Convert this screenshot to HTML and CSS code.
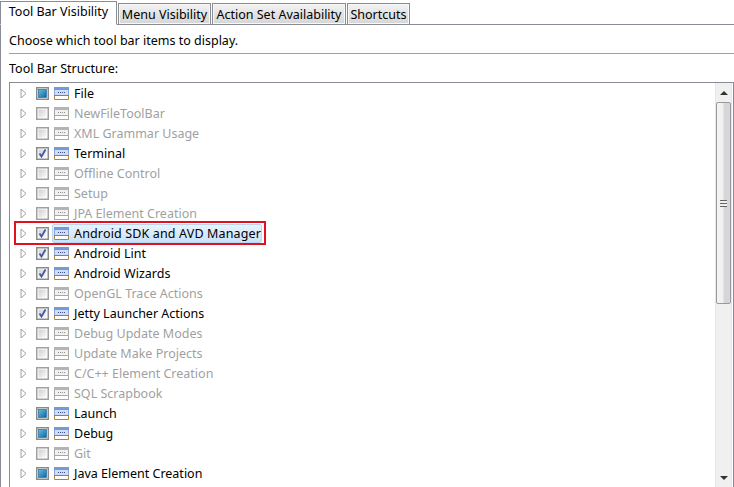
FILE: index.html
```html
<!DOCTYPE html>
<html>
<head>
<meta charset="utf-8">
<title>Tool Bar Visibility</title>
<link rel="stylesheet" href="styles.css">
</head>
<body>
<svg class="defs" width="0" height="0" aria-hidden="true">
  <defs>
    <symbol id="arrow" viewBox="0 0 7 11"><path d="M1 1 L6 5.5 L1 10 Z" fill="#fff" stroke="#a0a0a0"/></symbol>
    <symbol id="bar" viewBox="0 0 15 13">
      <rect x="0" y="0" width="15" height="13" fill="#fff"/>
      <rect x="0" y="0" width="15" height="3" fill="#6f9bd8"/>
      <rect x="0" y="3" width="15" height="5" fill="#d3dcf5"/>
      <path d="M0.5 3v5M14.5 3v5" stroke="#8fa6dc"/>
      <path d="M4 5.5h7" stroke="#3d4f88" stroke-dasharray="1 1"/>
      <path d="M0 8.5h15" stroke="#7f78b8"/>
      <path d="M0.5 9v3.5h14v-3.5" fill="none" stroke="#a8843f"/>
    </symbol>
    <symbol id="bar-off" viewBox="0 0 15 13">
      <rect x="0.5" y="0.5" width="14" height="12" fill="#fff" stroke="#a8a8a8"/>
      <rect x="0" y="0" width="15" height="3" fill="#b4b4b4"/>
      <rect x="1" y="3" width="13" height="5" fill="#f1f1f1"/>
      <path d="M4 5.5h7" stroke="#8f8f8f" stroke-dasharray="1 1"/>
      <path d="M0 8.5h15" stroke="#a8a8a8"/>
    </symbol>
    <linearGradient id="fill" x1="0" y1="0" x2="1" y2="1"><stop offset="0" stop-color="#6cbbdd"/><stop offset="1" stop-color="#07679f"/></linearGradient>
    <linearGradient id="boxbg" x1="0" y1="0" x2="1" y2="1"><stop offset="0" stop-color="#cfcfcf"/><stop offset="1" stop-color="#fbfbfb"/></linearGradient>
    <symbol id="cb-mixed" viewBox="0 0 13 13">
      <rect x="0.75" y="0.75" width="11.5" height="11.5" fill="#fff" stroke="#8a8a8a" stroke-width="1.5"/>
      <rect x="2.5" y="2.5" width="8" height="8" fill="url(#fill)" stroke="#1f6f9e" stroke-width="0.7"/>
    </symbol>
    <symbol id="cb-checked" viewBox="0 0 13 13">
      <rect x="0.75" y="0.75" width="11.5" height="11.5" fill="#fff" stroke="#8a8a8a" stroke-width="1.5"/>
      <rect x="2.5" y="2.5" width="8" height="8" fill="url(#boxbg)"/>
      <path d="M3.5 6.5 L5.5 9.5 L9.5 2.5" fill="none" stroke="#4458a8" stroke-width="1.8"/>
    </symbol>
    <symbol id="cb-off" viewBox="0 0 13 13">
      <rect x="0.75" y="0.75" width="11.5" height="11.5" fill="#fff" stroke="#a0a0a0" stroke-width="1.5"/>
      <rect x="2.5" y="2.5" width="8" height="8" fill="url(#boxbg)"/>
    </symbol>
  </defs>
</svg>
<div class="dialog">
  <div class="tabs">
    <div class="tab active">Tool Bar Visibility</div>
    <div class="tab t2">Menu Visibility</div>
    <div class="tab t3">Action Set Availability</div>
    <div class="tab t4">Shortcuts</div>
  </div>
  <div class="panel">
    <p class="intro">Choose which tool bar items to display.</p>
    <hr class="sep">
    <p class="label">Tool Bar Structure:</p>
    <div class="treebox">
      <ul class="tree">
        <li class="row"><svg class="arr"><use href="#arrow"/></svg><svg class="cb"><use href="#cb-mixed"/></svg><svg class="ic"><use href="#bar"/></svg><span class="txt">File</span></li>
        <li class="row off"><svg class="arr"><use href="#arrow"/></svg><svg class="cb"><use href="#cb-off"/></svg><svg class="ic"><use href="#bar-off"/></svg><span class="txt">NewFileToolBar</span></li>
        <li class="row off"><svg class="arr"><use href="#arrow"/></svg><svg class="cb"><use href="#cb-off"/></svg><svg class="ic"><use href="#bar-off"/></svg><span class="txt">XML Grammar Usage</span></li>
        <li class="row"><svg class="arr"><use href="#arrow"/></svg><svg class="cb"><use href="#cb-checked"/></svg><svg class="ic"><use href="#bar"/></svg><span class="txt">Terminal</span></li>
        <li class="row off"><svg class="arr"><use href="#arrow"/></svg><svg class="cb"><use href="#cb-off"/></svg><svg class="ic"><use href="#bar-off"/></svg><span class="txt">Offline Control</span></li>
        <li class="row off"><svg class="arr"><use href="#arrow"/></svg><svg class="cb"><use href="#cb-off"/></svg><svg class="ic"><use href="#bar-off"/></svg><span class="txt">Setup</span></li>
        <li class="row off"><svg class="arr"><use href="#arrow"/></svg><svg class="cb"><use href="#cb-off"/></svg><svg class="ic"><use href="#bar-off"/></svg><span class="txt">JPA Element Creation</span></li>
        <li class="row marked"><svg class="arr"><use href="#arrow"/></svg><svg class="cb"><use href="#cb-checked"/></svg><span class="sel"><svg class="ic"><use href="#bar"/></svg><span class="txt">Android SDK and AVD Manager</span></span><span class="redbox"></span></li>
        <li class="row"><svg class="arr"><use href="#arrow"/></svg><svg class="cb"><use href="#cb-checked"/></svg><svg class="ic"><use href="#bar"/></svg><span class="txt">Android Lint</span></li>
        <li class="row"><svg class="arr"><use href="#arrow"/></svg><svg class="cb"><use href="#cb-checked"/></svg><svg class="ic"><use href="#bar"/></svg><span class="txt">Android Wizards</span></li>
        <li class="row off"><svg class="arr"><use href="#arrow"/></svg><svg class="cb"><use href="#cb-off"/></svg><svg class="ic"><use href="#bar-off"/></svg><span class="txt">OpenGL Trace Actions</span></li>
        <li class="row"><svg class="arr"><use href="#arrow"/></svg><svg class="cb"><use href="#cb-checked"/></svg><svg class="ic"><use href="#bar"/></svg><span class="txt">Jetty Launcher Actions</span></li>
        <li class="row off"><svg class="arr"><use href="#arrow"/></svg><svg class="cb"><use href="#cb-off"/></svg><svg class="ic"><use href="#bar-off"/></svg><span class="txt">Debug Update Modes</span></li>
        <li class="row off"><svg class="arr"><use href="#arrow"/></svg><svg class="cb"><use href="#cb-off"/></svg><svg class="ic"><use href="#bar-off"/></svg><span class="txt">Update Make Projects</span></li>
        <li class="row off"><svg class="arr"><use href="#arrow"/></svg><svg class="cb"><use href="#cb-off"/></svg><svg class="ic"><use href="#bar-off"/></svg><span class="txt">C/C++ Element Creation</span></li>
        <li class="row off"><svg class="arr"><use href="#arrow"/></svg><svg class="cb"><use href="#cb-off"/></svg><svg class="ic"><use href="#bar-off"/></svg><span class="txt">SQL Scrapbook</span></li>
        <li class="row"><svg class="arr"><use href="#arrow"/></svg><svg class="cb"><use href="#cb-mixed"/></svg><svg class="ic"><use href="#bar"/></svg><span class="txt">Launch</span></li>
        <li class="row"><svg class="arr"><use href="#arrow"/></svg><svg class="cb"><use href="#cb-mixed"/></svg><svg class="ic"><use href="#bar"/></svg><span class="txt">Debug</span></li>
        <li class="row off"><svg class="arr"><use href="#arrow"/></svg><svg class="cb"><use href="#cb-off"/></svg><svg class="ic"><use href="#bar-off"/></svg><span class="txt">Git</span></li>
        <li class="row"><svg class="arr"><use href="#arrow"/></svg><svg class="cb"><use href="#cb-mixed"/></svg><svg class="ic"><use href="#bar"/></svg><span class="txt">Java Element Creation</span></li>
      </ul>
      <div class="scroll">
        <div class="sbtn"><span class="up"></span></div>
        <div class="thumb"><span class="grip"></span></div>
        <div class="track"></div>
        <div class="sbtn"><span class="down"></span></div>
      </div>
    </div>
  </div>
</div>
</body>
</html>
```
FILE: styles.css
```css
html, body {
  margin: 0;
  padding: 0;
  width: 734px;
  height: 487px;
  overflow: hidden;
  background: #fff;
}
body {
  font-family: "Noto Sans", sans-serif;
  font-size: 12.5px;
  color: #000;
}
.defs { display: block; height: 0; }
.dialog { width: 734px; height: 487px; display: flex; flex-direction: column; }
.tabs {
  display: flex;
  align-items: flex-end;
  height: 24px;
  border-bottom: 1px solid #898c95;
  flex: none;
}
.tab {
  box-sizing: border-box;
  height: 22px;
  margin-bottom: -1px;
  padding-top: 3px;
  line-height: 15px;
  text-align: center;
  background: linear-gradient(#f2f2f2, #d5d5d5);
  border: 1px solid #898c95;
  box-shadow: inset 0 0 0 1px #f8f8f8;
  white-space: nowrap;
}
.tab.active {
  width: 117px;
  height: 24px;
  background: #fff;
  border-bottom-color: #fff;
  box-shadow: none;
  padding-top: 2px;
  margin-right: 1px;
}
.t2 { width: 93px; margin-right: 1px; }
.t3 { width: 134px; margin-right: 1px; }
.t4 { width: 63px; }
.panel {
  flex: 1;
  min-height: 0;
  border-left: 1px solid #898c95;
  padding-left: 8px;
  display: flex;
  flex-direction: column;
}
.intro { margin: 8px 0 0; height: 15px; line-height: 15px; }
.sep { margin: 5px 0 0; border: 0; border-top: 1px solid #a0a0a0; height: 0; flex: none; }
.label { margin: 7px 0 0; height: 15px; line-height: 15px; }
.treebox {
  margin-top: 6px;
  flex: 1;
  min-height: 0;
  box-sizing: border-box;
  border: 1px solid #898c95;
  border-bottom: 0;
  display: flex;
  overflow: hidden;
}
.tree {
  list-style: none;
  margin: 0;
  padding: 0;
  flex: 1;
  min-width: 0;
}
.row {
  height: 20px;
  display: flex;
  align-items: center;
  padding-left: 10px;
  position: relative;
}
.arr { width: 7px; height: 11px; flex: none; }
.cb { width: 13px; height: 13px; flex: none; margin-left: 9px; }
.ic { width: 15px; height: 13px; flex: none; margin-left: 5px; }
.txt { margin-left: 5px; white-space: nowrap; line-height: 15px; }
.off .txt { color: #9f9f9f; }
.sel {
  display: flex;
  align-items: center;
  box-sizing: border-box;
  height: 19px;
  width: 210px;
  margin-left: 3px;
  padding-left: 1px;
  border: 1px solid #b8d6f0;
  border-radius: 2px;
  background: linear-gradient(#e8f3fd, #c9e2f9);
}
.sel .ic { margin-left: 0; }
.sel .txt { letter-spacing: 0.15px; }
.redbox {
  position: absolute;
  left: 4px;
  top: -2px;
  width: 252px;
  height: 24px;
  box-sizing: border-box;
  border: 2px solid #e3101f;
  pointer-events: none;
}
.scroll {
  flex: none;
  width: 17px;
  margin-right: 1px;
  display: flex;
  flex-direction: column;
  background: #f0f0f0;
  border-left: 1px solid #e6e6e6;
  border-right: 1px solid #e6e6e6;
  box-sizing: border-box;
}
.sbtn { height: 19px; flex: none; display: flex; align-items: center; justify-content: center; }
.up, .down { width: 0; height: 0; border-left: 4px solid transparent; border-right: 4px solid transparent; }
.up { border-bottom: 4px solid #333; }
.down { border-top: 4px solid #333; }
.thumb {
  flex: none;
  height: 202px;
  box-sizing: border-box;
  border: 1px solid #9a9a9a;
  border-radius: 2px;
  background: linear-gradient(90deg, #f2f2f2 0%, #f2f2f2 40%, #d4d4d8 60%, #d8d8dc 100%);
  display: flex;
  align-items: center;
  justify-content: center;
}
.grip {
  width: 7px;
  height: 7px;
  background: repeating-linear-gradient(#666 0, #666 1px, #eee 1px, #eee 3px);
}
.track { flex: 1; }
```
